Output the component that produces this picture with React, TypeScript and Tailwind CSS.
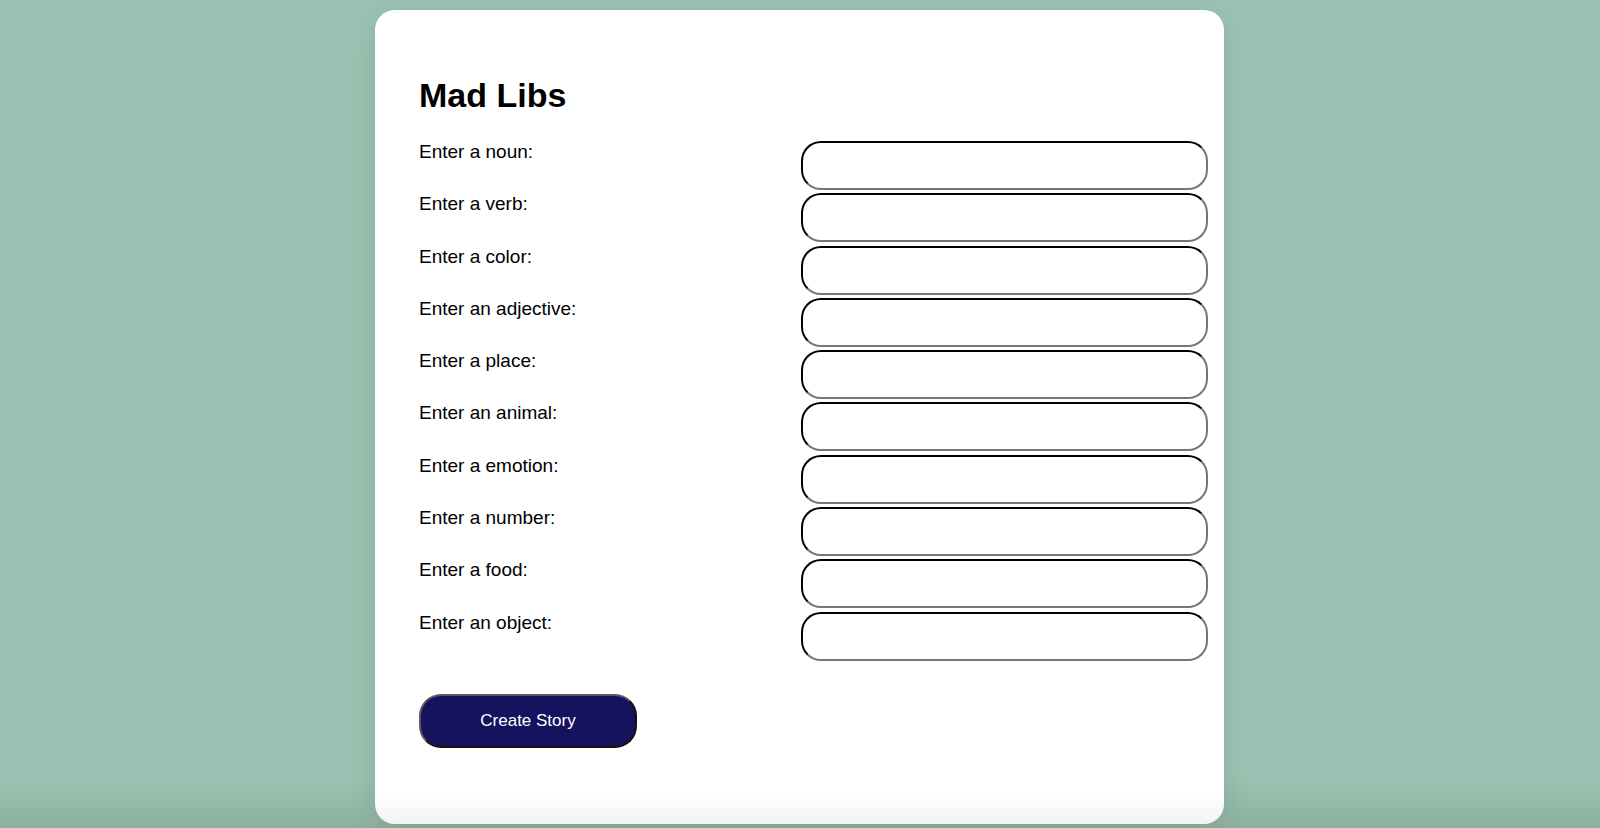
import { useState } from 'react'

const FIELDS = [
  'Enter a noun:',
  'Enter a verb:',
  'Enter a color:',
  'Enter an adjective:',
  'Enter a place:',
  'Enter an animal:',
  'Enter a emotion:',
  'Enter a number:',
  'Enter a food:',
  'Enter an object:',
]

export default function App() {
  const [values, setValues] = useState<string[]>(FIELDS.map(() => ''))

  return (
    <div className="h-[828px] overflow-hidden bg-[linear-gradient(to_bottom,#9bc2b2_94%,#8db1a1)] pt-[10px] font-['Liberation_Sans',Arial,sans-serif] text-black">
      <div className="ml-[375px] h-[814px] w-[849px] rounded-[20px] bg-[linear-gradient(to_bottom,#ffffff_96%,#f3f3f3)] pl-[44px] pr-[16px] pt-[66px] shadow-[0_6px_30px_rgba(0,0,0,0.1)]">
        <h1 className="m-0 text-[34px] font-bold leading-[39px]">Mad Libs</h1>

        <div className="mt-[26px] grid grid-cols-[382px_407px] gap-y-[3.3px]">
          {FIELDS.map((label, i) => (
            <div key={label} className="contents">
              <label htmlFor={`f${i}`} className="text-[19px] leading-[22px]">
                {label}
              </label>
              <input
                id={`f${i}`}
                value={values[i]}
                onChange={e => {
                  const next = [...values]
                  next[i] = e.target.value
                  setValues(next)
                }}
                className="h-[49px] rounded-[20px] border-2 border-t-black border-l-black border-r-[#767676] border-b-[#767676] bg-white px-3 text-[19px] outline-none"
              />
            </div>
          ))}
        </div>

        <button className="mt-[33px] h-[54px] w-[218px] rounded-[22px] border-2 border-t-[#5a5a5a] border-l-[#5a5a5a] border-r-[#111] border-b-[#111] bg-[#15135e] text-[17px] text-white">
          Create Story
        </button>
      </div>
    </div>
  )
}
